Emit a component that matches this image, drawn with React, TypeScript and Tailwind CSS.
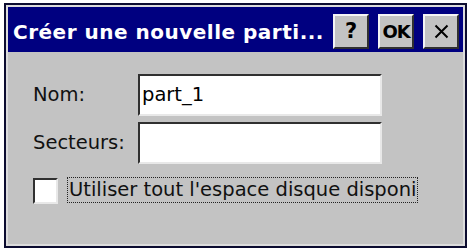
const font = { fontFamily: '"DejaVu Sans", Verdana, sans-serif' };

function TitleButton({ children }: { children: React.ReactNode }) {
  return (
    <div className="flex h-[35px] w-[36px] items-center justify-center border-2 border-t-[#f4f4f4] border-l-[#f4f4f4] border-r-[#303030] border-b-[#303030] bg-[#c3c3c3] text-[21px] font-bold leading-none text-black">
      {children}
    </div>
  );
}

function Field({ label, value }: { label: string; value?: string }) {
  return (
    <div className="flex items-center">
      <span className="w-[105px] text-[19.5px] leading-none text-[#111]">{label}</span>
      <div className="flex h-[42px] w-[244px] items-center border-2 border-t-[#303030] border-l-[#303030] border-r-[#e8e8e8] border-b-[#e8e8e8] bg-white pl-[2px] text-[19.5px] leading-none text-black">
        {value}
      </div>
    </div>
  );
}

export default function App() {
  return (
    <div className="h-[251px] w-[468px] bg-white pl-[4px] pt-[3px]" style={font}>
      <div className="flex h-[245px] w-[463px] flex-col border-2 border-[#0c0c30]">
        <div className="flex flex-1 flex-col border-2 border-[#dcdcdc] bg-[#c3c3c3]">
          <div className="flex h-[45px] items-center gap-[9px] bg-[#000080] pl-[5px] pr-[4px] pt-[4px]">
            <span className="flex-1 whitespace-nowrap text-[20px] font-bold leading-none tracking-[0.5px] text-white">
              Créer une nouvelle parti...
            </span>
            <TitleButton>?</TitleButton>
            <TitleButton>
              <span className="text-[18px] tracking-[-1px]">OK</span>
            </TitleButton>
            <TitleButton>
              <svg width="15" height="15" viewBox="0 0 15 15">
                <path d="M1.5 1.5 L13.5 13.5 M13.5 1.5 L1.5 13.5" stroke="#000" strokeWidth="2" />
              </svg>
            </TitleButton>
          </div>
          <div className="flex flex-col pl-[25px] pt-[22px]">
            <Field label="Nom:" value="part_1" />
            <div className="h-[6px]" />
            <Field label="Secteurs:" />
            <div className="mt-[12px] flex items-center">
              <div className="mt-[2px] h-[26px] w-[25px] border-2 border-t-[#303030] border-l-[#303030] border-r-[#e8e8e8] border-b-[#e8e8e8] bg-white" />
              <span className="ml-[9px] flex h-[26px] w-[351px] items-center whitespace-nowrap border border-dotted border-[#222] pl-[1px] text-[19.5px] leading-none text-[#111]">
                Utiliser tout l'espace disque disponi
              </span>
            </div>
          </div>
        </div>
      </div>
    </div>
  );
}
